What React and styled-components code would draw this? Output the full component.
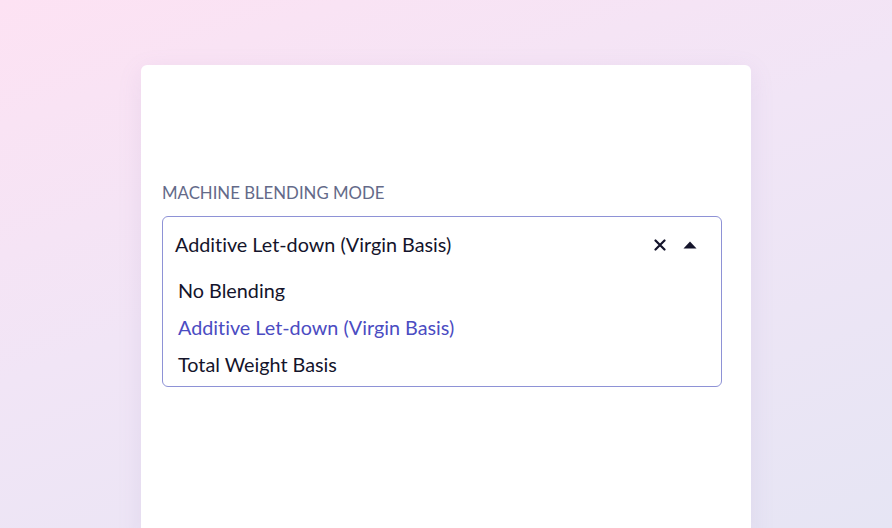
import React from 'react';
import styled, { createGlobalStyle } from 'styled-components';

const GlobalStyle = createGlobalStyle`
  html, body {
    margin: 0;
    padding: 0;
  }
  body {
    width: 892px;
    height: 528px;
    overflow: hidden;
    font-family: "Lato", "Open Sans", sans-serif;
    font-variant-ligatures: none;
    background: linear-gradient(160deg, #fde2f3 0%, #f1e5f6 45%, #e6e5f4 100%);
  }
`;

const Page = styled.div`
  display: flex;
  justify-content: flex-start;
  padding: 65px 0 0 141px;
  height: 528px;
  box-sizing: border-box;
`;

const Card = styled.div`
  width: 610px;
  height: 480px;
  background: #fff;
  border-radius: 6px;
  box-shadow: 0 6px 24px rgba(150, 120, 190, 0.12);
  padding: 118px 0 0 21px;
  box-sizing: border-box;
`;

const Label = styled.div`
  font-size: 16.8px;
  color: #646a89;
  text-transform: uppercase;
  margin-bottom: 14px;
  line-height: 19px;
`;

const Select = styled.div`
  width: 560px;
  border: 1px solid #8e92d6;
  border-radius: 6px;
  box-sizing: border-box;
  overflow: hidden;
`;

const Control = styled.div`
  display: flex;
  align-items: center;
  height: 55px;
  padding: 0 24px 2px 12px;
  box-sizing: border-box;
`;

const Value = styled.div`
  flex: 1;
  font-size: 19.8px;
  line-height: 24px;
  color: #14142b;
`;

const Icons = styled.div`
  display: flex;
  align-items: center;
  gap: 17px;
  margin-top: 2px;
`;

const Menu = styled.div`
  padding: 0 0 3px;
`;

const Option = styled.div`
  height: 37px;
  display: flex;
  align-items: center;
  padding: 0 15px 1px;
  box-sizing: border-box;
  font-size: 19.8px;
  line-height: 24px;
  color: ${p => (p.$selected ? '#4b4cc2' : '#14142b')};
`;

const options = ['No Blending', 'Additive Let-down (Virgin Basis)', 'Total Weight Basis'];

export default function App() {
  const selected = options[1];
  return (
    <>
      <GlobalStyle />
      <Page>
        <Card>
          <Label>Machine Blending Mode</Label>
          <Select>
            <Control>
              <Value>{selected}</Value>
              <Icons>
                <svg width="12" height="12" viewBox="0 0 12 12">
                  <path d="M1.5 1.5 L10.5 10.5 M10.5 1.5 L1.5 10.5" stroke="#14142b" strokeWidth="2.2" strokeLinecap="round" />
                </svg>
                <svg width="14" height="8" viewBox="0 0 14 8">
                  <path d="M7 0.5 L13.5 7.5 L0.5 7.5 Z" fill="#14142b" />
                </svg>
              </Icons>
            </Control>
            <Menu>
              {options.map(o => (
                <Option key={o} $selected={o === selected}>{o}</Option>
              ))}
            </Menu>
          </Select>
        </Card>
      </Page>
    </>
  );
}
